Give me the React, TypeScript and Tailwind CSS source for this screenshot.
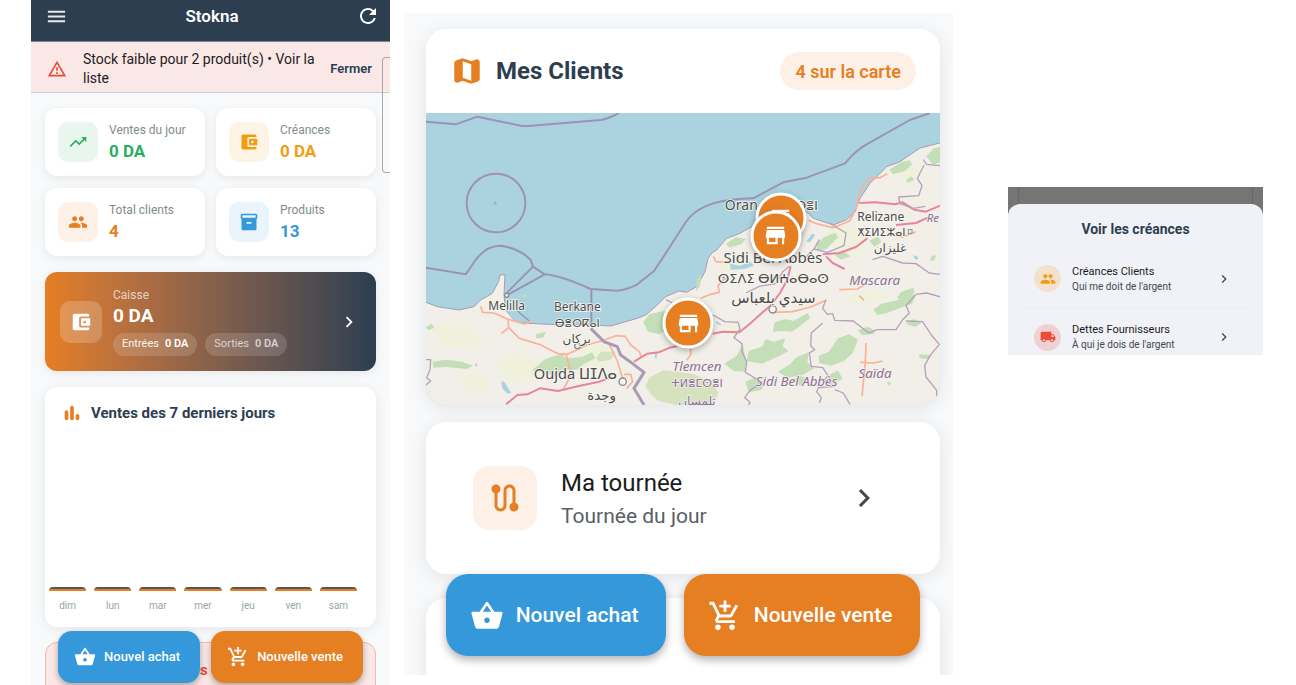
import React from 'react';
import {
    MdAddShoppingCart,
    MdChevronRight,
    MdInventory2,
    MdLocalShipping,
    MdMenu,
    MdOutlineWarningAmber,
    MdRefresh,
    MdRoute,
    MdTrendingUp
} from 'react-icons/md';

interface StatTileProps {
    label: string;
    value: string;
    icon: React.ReactNode;
    tileClass: string;
    valueClass: string;
}

interface IconProps {
    className?: string;
}

const days = ['dim', 'lun', 'mar', 'mer', 'jeu', 'ven', 'sam'];

// Rounded material glyphs that the icon package does not ship
const WalletIcon = ({ className }: IconProps) => (
    <svg viewBox="0 0 24 24" fill="currentColor" className={className} aria-hidden="true">
        <path d="M10 16V8c0-1.1.89-2 2-2h9V5c0-1.1-.9-2-2-2H5c-1.11 0-2 .9-2 2v14c0 1.1.89 2 2 2h14c1.1 0 2-.9 2-2v-1h-9c-1.11 0-2-.9-2-2zm3-8c-.55 0-1 .45-1 1v6c0 .55.45 1 1 1h9V8h-9zm3 5.5c-.83 0-1.5-.67-1.5-1.5s.67-1.5 1.5-1.5 1.5.67 1.5 1.5-.67 1.5-1.5 1.5z" />
    </svg>
);

const BarsIcon = ({ className }: IconProps) => (
    <svg viewBox="0 0 24 24" fill="currentColor" className={className} aria-hidden="true">
        <rect x="4" y="9" width="4" height="11" rx="2" />
        <rect x="10" y="4" width="4" height="16" rx="2" />
        <rect x="16" y="13" width="4" height="7" rx="2" />
    </svg>
);

const PeopleIcon = ({ className }: IconProps) => (
    <svg viewBox="0 0 24 24" fill="currentColor" className={className} aria-hidden="true">
        <path d="M16 11c1.66 0 2.99-1.34 2.99-3S17.66 5 16 5s-3 1.34-3 3 1.34 3 3 3zm-8 0c1.66 0 2.99-1.34 2.99-3S9.66 5 8 5 5 6.34 5 8s1.34 3 3 3zm0 2c-2.33 0-7 1.17-7 3.5V18c0 .55.45 1 1 1h12c.55 0 1-.45 1-1v-1.5c0-2.33-4.67-3.5-7-3.5zm8 0c-.29 0-.62.02-.97.05.02.01.03.03.04.04 1.14.83 1.93 1.94 1.93 3.41V18c0 .35-.07.69-.18 1H22c.55 0 1-.45 1-1v-1.5c0-2.33-4.67-3.5-7-3.5z" />
    </svg>
);

const BasketIcon = ({ className }: IconProps) => (
    <svg viewBox="0 0 24 24" fill="currentColor" className={className} aria-hidden="true">
        <path
            fillRule="evenodd"
            d="M17.21 9l-4.38-6.56c-.19-.28-.51-.42-.83-.42-.32 0-.64.14-.83.43L6.79 9H2c-.55 0-1 .45-1 1 0 .09.01.18.04.27l2.54 9.27c.23.84 1 1.46 1.92 1.46h13c.92 0 1.69-.62 1.93-1.46l2.54-9.27L23 10c0-.55-.45-1-1-1h-4.79zM9 9l3-4.4L15 9H9zm3 8c-1.1 0-2-.9-2-2s.9-2 2-2 2 .9 2 2-.9 2-2 2z"
        />
    </svg>
);

const StoreIcon = ({ className }: IconProps) => (
    <svg viewBox="0 0 24 24" fill="currentColor" className={className} aria-hidden="true">
        <path d="M20 4H4v2h16V4zm1 10v-2l-1-5H4l-1 5v2h1v6h10v-6h4v6h2v-6h1zm-9 4H6v-4h6v4z" />
    </svg>
);

const MapIcon = ({ className }: IconProps) => (
    <svg viewBox="0 0 24 24" fill="currentColor" className={className} aria-hidden="true">
        <path d="M14.65 4.98l-5-1.75c-.42-.15-.88-.15-1.3-.01L4.36 4.56C3.55 4.84 3 5.6 3 6.46v11.85c0 1.41 1.41 2.37 2.72 1.86l2.93-1.14c.22-.09.47-.09.69-.01l5 1.75c.42.15.88.15 1.3.01l3.99-1.34c.81-.27 1.36-1.04 1.36-1.9V5.69c0-1.41-1.41-2.37-2.72-1.86l-2.93 1.14c-.22.08-.46.09-.69.01zM15 18.89l-6-2.11V5.11l6 2.11v11.67z" />
    </svg>
);

const StatTile = ({ label, value, icon, tileClass, valueClass }: StatTileProps) => (
    <div className="flex h-[68px] items-center gap-[11px] rounded-xl bg-white px-[13px] shadow-[0_2px_8px_rgba(0,0,0,0.08)]">
        <div className={`flex size-10 shrink-0 items-center justify-center rounded-[10px] ${tileClass}`}>{icon}</div>
        <div className="pb-0.5">
            <p className="text-[12px] leading-5 whitespace-nowrap text-[#7f8c8d]">{label}</p>
            <p className={`text-[17px] leading-[22px] font-bold ${valueClass}`}>{value}</p>
        </div>
    </div>
);

const ClientMap = () => (
    <svg
        viewBox="0 0 1542 876"
        preserveAspectRatio="xMidYMid slice"
        className="block h-full w-full font-['Noto_Sans','DejaVu_Sans',sans-serif]"
        role="img"
        aria-label="Carte des clients"
    >
        <rect width="1542" height="876" fill="#aad3df" />
        {/* Land */}
        <path
            d="M-10 564L34 581 99 591 144 581 164 561 199 541 218 505 222 486 237 485 234 546 239 591 264 621 304 631 374 634 414 636 494 636 554 639 634 616 659 606 694 576 719 551 759 534 782 538 812 521 837 476 846 436 860 418 872 411 902 376 942 361 977 341 1012 301 1060 275 1110 275 1147 301 1162 316 1192 326 1222 336 1262 320 1287 296 1302 256 1332 211 1382 161 1422 146 1482 105 1560 85V890H-10Z"
            fill="#f2efe9"
            stroke="#a79cb3"
            strokeWidth="3"
        />
        {/* Farmland */}
        <g fill="#f0f1dc">
            <path d="M20 640l60-10 60 20 40 40-60 20-70-10z M210 740l70-20 60 30-20 50-80 10z M90 790l70-10 40 40-60 30z" />
            <path d="M1250 558l38-20 56-4 44 14-40 18-60 8z M450 690l60-10 50 40-10 40-80 10z M1190 350l60-20 60 20 10 60-70 30z" />
            <path d="M880 440l60-20 30 10-30 40-50 20z M1400 170l50-20 40 20-50 40z M900 640l30-10 20 30-30 10z" />
        </g>
        {/* Forests */}
        <g fill="#c4dfb8">
            <path d="M652 628l18-24 42-10 16 6-12 26 4 24-18 14-36-8z" />
            <path d="M318 772l40-34 50-16 12 14 48-4 30-14 10 18-36 18-20 16-44 2-22 16-30-8z" />
            <path d="M894 752l38-24 18-36 10 50-2 34-34-2z" />
            <path d="M962 744l6-30 42-14 8-22 26 8 34-10-8 24 18 14-30 16-50 22z" />
            <path d="M1040 656l6-28 34-10 22 6 44-24 6 16-34 26-20 14-30-2z" />
            <path d="M1056 776l36-22 20-22 36-14-4 28 20 20-34 20-46 8z" />
            <path d="M1178 728l30-12 28-40 34-12 26 16-16 40-26 24-40 14-34-8z" />
            <path d="M958 806l30-14 28 16-8 22-40 8z M1096 800l30-10 26 12-30 16z M1210 786l26-14 14 26-30 16z" />
            <path d="M1342 590l24-18 48-10 34-20 22 4-12 26-34 12-40 16-30 6z M1412 556l14-20 36-12 4 14-24 20z" />
            <path d="M900 392l30-20 30 6-14 16-36 10z M1170 395l24-22 34-14 8 14-34 34-26 8z" />
            <path d="M1330 384l26-14 10 16-20 16z M1224 424l30-8 20 14-30 10z" />
            <path d="M1390 170l35-22 26-6 8 12-22 20-36 10z M1500 130l24-24 18-4v46l-20 8z M1440 200l18-10 6 12-20 8z" />
            <path d="M1295 652l30-11 24 12-6 10-34 4z M1438 632l24-14 25 12-20 12z M1478 724l40 2-10 12-26-2z" />
            <path d="M20 746l40-6 48 6 34 12-20 10-60-6-40 2z M0 642l16-10 10 12-20 8z" />
            <path d="M290 548l10-4 2 12z M330 664l30-8-8 18-22 2z M1516 430l14-4-4 16-14 2z M812 500l14-16-4 36-12 14z M1382 806l14 2-6 12z" />
        </g>
        <path
            d="M680 850l-22-30 12-26 40-22 44 4 50 8 50 22 24 34-20 36h-110l-50-12z M510 736l14-20 46 0-16 24-36 6z"
            fill="#d6e2bd"
        />
        <g fill="#aad3df">
            <path d="M226 804l10 4 12 20 8 12-12 2-16-18z" />
            <path d="M912 452l30 6 30-12 12 12-30 10-40 2z M1140 386l18-24 10 4-16 22z" />
            <path d="M148 750l4 0 2 10-6 0z M688 716l6 4-2 14-6 0z M870 624l12 6 4 8-14-6z M1462 426l14 6 0 8-10-2z" />
            <path d="M246 594l14 8 22 22 20 4-30-2-18-14z" />
        </g>
        {/* Secondary roads */}
        <g fill="none" stroke="#fbb197" strokeWidth="5" strokeLinejoin="round">
            <path d="M164 580l6 18 34 2 40 18 50 15 26-8" />
            <path d="M246 618l2 26-22 18M248 644l32 32 60 18 56 28 28 2 30-14 28-14 44-12 44-16 28 2 16 26 26 20 6 16" />
            <path d="M420 724l10 38 8 18-26 50M550 694l24 50 16 52M594 784l20 0 6 22-18 20" />
            <path d="M862 430l8 16 32 2M824 556l30-12 26-6-4-20 16-18 16-4M1040 598l60-2 54-14 46-20" />
            <path d="M1147 322l24 10 50 12 50-20 16-30M1290 290l12-60 30-34 30-2 22-12" />
            <path d="M1240 530l54-2 22-12M1320 690l-2 58-14 0 40 2 26-6M1318 746l-10 104" />
            <path d="M1300 548l14 14M782 742l12-16 0-18M1400 366l30 6 40-16" />
        </g>
        {/* Main roads */}
        <g fill="none" stroke="#e8859e" strokeWidth="6" strokeLinejoin="round">
            <path d="M240 874l34-28 30-2 38-18 54 8 66-16 58-12 34-12M624 746l40-24 34-4 34-14 42-10M860 662l30-6 50 2 30-24 40-36 22-18 30-40 22-40 10-40" />
            <path d="M1300 270l48-2 60 6 22-6 34 22 36 6 42-18M1410 336l60-6 36-16" />
            <path d="M1190 424l50-4 50-18 34-26M1200 430l20 20 36 18" />
        </g>
        {/* Province limits */}
        <g fill="none" stroke="#b6a1bd" strokeWidth="4" strokeLinejoin="round">
            <path d="M862 606l34 20 40 2 6 20-18 26 24 18 0 24 14 30-4 32 34 20 10 14-30 20-16 22 16 14-6 12" />
            <path d="M1200 560l-10 26 14 18 16-2 6 20 56 2 46 36 26-10 56 0 20-30 20-20-10-22 30-34 32-4 42 12" />
            <path d="M1190 630l-34 30-2 38 12 12-16 10 6 40 34 4 16 24-12 14 34 18-50 4-6 12 14 18-6 16M1226 830l26 10 20 34" />
            <path d="M1440 624l50 2 26 40 24 28-28 34-16 30 4 34 32 40 0 20" />
            <path d="M1542 158l-40-4-10-14M1494 156l-20 40 14 22-10 30-60 4 4 20 40 14 36-6" />
            <path d="M1180 380l-16 28-30 30M1164 408l40 10 50-20 6-38-50-30M960 540l40-20 50-8 20-36 20-16" />
            <path d="M1340 440l30-10 60 20 40 2 40 28 32 4" />
            <path d="M0 740l14 0-2 30-10 24 12 10-14 12M720 560l20 10 10 18" />
        </g>
        {/* Maritime and national borders */}
        <g fill="none" stroke="#9c93b4" strokeWidth="6" strokeLinejoin="round">
            <path d="M0 26L89 34 154 11 284 38Q310 40 334 37L524 21Q545 18 579 0" />
            <circle cx="210" cy="270" r="88" />
            <path d="M0 464L119 484 149 441Q180 398 224 398 280 406 314 441L321 461 356 484Q400 486 494 528L574 533Q610 528 634 514L684 474 706 441 774 336Q800 290 862 271 910 258 982 256L1072 208 1142 194 1257 151Q1290 110 1332 88L1452 21 1512 0" />
            <path d="M321 461L241 541M356 484L244 546M496 528V640" />
            <path d="M270 590l40 34" strokeWidth="4" />
        </g>
        <path d="M494 646l40 40 40 15 10 25 35 25 35 27-30 48 30 50" fill="none" stroke="#a99bb6" strokeWidth="9" />
        <circle cx="208" cy="271" r="4" fill="#8fb2c4" />
        <g fill="#f7f5f1" stroke="#8b8b8b" strokeWidth="4">
            <circle cx="242" cy="547" r="6" />
            <circle cx="454" cy="699" r="8" />
            <circle cx="590" cy="806" r="11" />
            <circle cx="1040" cy="589" r="11" />
            <rect x="1447" y="350" width="11" height="11" strokeWidth="3" />
        </g>
        {/* City names */}
        <g fill="#4b4b4b" stroke="#f7f5f1" strokeWidth="5" paintOrder="stroke" textAnchor="middle" fontSize="36">
            <text x="242" y="590">Melilla</text>
            <text x="454" y="594">Berkane</text>
            <text x="454" y="641" fontSize="33">ⴱⴻⵔⴽⴰⵏ</text>
            <text x="452" y="690">بركان</text>
            <text x="448" y="798" fontSize="44">Oujda ⵡⵊⴷⴰ</text>
            <text x="527" y="861" fontSize="40">وجدة</text>
            <text x="946" y="292" fontSize="42">Oran</text>
            <text x="1142" y="290" fontSize="36">ⵔⴻⵏ</text>
            <text x="1041" y="450" fontSize="45">Sidi Bel Abbès</text>
            <text x="1042" y="509" fontSize="39">ⵙⵉⴷⵉ ⴱⵍⵄⴰⴱⴰⵙ</text>
            <text x="1042" y="571" fontSize="45">سيدي بلعباس</text>
            <text x="1364" y="324">Relizane</text>
            <text x="1366" y="370" fontSize="33">ⵅⵉⵍⵉⵣⴰⵏ</text>
            <text x="1392" y="418">غليزان</text>
        </g>
        {/* Province names */}
        <g fill="#8d6f94" stroke="#f5f2ee" strokeWidth="4" paintOrder="stroke" textAnchor="middle" fontSize="40">
            <text x="813" y="773" fontStyle="italic">Tlemcen</text>
            <text x="813" y="822" fontSize="33">ⵜⵍⴻⵎⵙⴻⵏ</text>
            <text x="813" y="876" fontSize="36">تلمسان</text>
            <text x="1112" y="820" fontStyle="italic">Sidi Bel Abbès</text>
            <text x="1346" y="516" fontStyle="italic">Mascara</text>
            <text x="1347" y="796" fontStyle="italic">Saïda</text>
            <text x="1502" y="328" fontStyle="italic" fontSize="34" textAnchor="start">Re</text>
        </g>
    </svg>
);

const pins = [
    { name: 'Client Oran', place: 'left-[69%] top-[36%]' },
    { name: 'Client Sidi Bel Abbès', place: 'left-[68%] top-[42%]' },
    { name: 'Client Tlemcen', place: 'left-[51%] top-[72%]' }
];

const HomeScreen = () => (
    <section className="relative h-full min-w-0 flex-[359_1_0%] overflow-hidden bg-[#f8f9fb]">
        <header className="flex h-[42px] items-start justify-between border-b border-[#7d8792] bg-[#2c3e50] pt-1 pr-[10px] pl-[13px] text-white">
            <button type="button" aria-label="Menu" className="flex size-6 items-center justify-center text-[#e8eaee]">
                <MdMenu className="size-[23px] shrink-0" />
            </button>
            <h1 className="text-[17px] leading-6 font-semibold">Stokna</h1>
            <button type="button" aria-label="Actualiser" className="flex size-6 items-center justify-center">
                <MdRefresh className="size-6 shrink-0" />
            </button>
        </header>

        <div className="flex h-[51px] items-center border-b border-[#c5cbd7] bg-[#f9e8e6] pt-[3px] pr-[18px] pl-4">
            <MdOutlineWarningAmber className="size-5 shrink-0 text-[#e74c3c]" />
            <p className="ml-4 min-w-0 flex-1 text-[14px] leading-[19px] text-[#1f2024]">
                Stock faible pour 2 produit(s) • Voir la liste
            </p>
            <button type="button" className="shrink-0 text-[13px] font-semibold text-[#2c3e50]">Fermer</button>
        </div>
        <div className="absolute top-[57px] right-0 h-[116px] w-2 rounded-l border border-r-0 border-[#a9a9ad]" />

        <main className="px-[14px] pt-[15px]">
            <div className="grid grid-cols-2 gap-x-[11px] gap-y-3">
                <StatTile
                    label="Ventes du jour"
                    value="0 DA"
                    icon={<MdTrendingUp className="size-5" />}
                    tileClass="bg-[#e8f6ee] text-[#27ae60]"
                    valueClass="text-[#27ae60]"
                />
                <StatTile
                    label="Créances"
                    value="0 DA"
                    icon={<WalletIcon className="size-5" />}
                    tileClass="bg-[#fef4e6] text-[#f39c12]"
                    valueClass="text-[#f39c12]"
                />
                <StatTile
                    label="Total clients"
                    value="4"
                    icon={<PeopleIcon className="size-5" />}
                    tileClass="bg-[#fdf1e7] text-[#e67e22]"
                    valueClass="text-[#e67e22]"
                />
                <StatTile
                    label="Produits"
                    value="13"
                    icon={<MdInventory2 className="size-5" />}
                    tileClass="bg-[#e9f4fd] text-[#3498db]"
                    valueClass="text-[#3498db]"
                />
            </div>

            <button
                type="button"
                className="mt-4 flex h-[99px] w-full items-center rounded-xl bg-linear-to-r from-[#e67e22] to-[#2c3e50] pr-4 pl-[15px] text-left text-white shadow-[0_2px_8px_rgba(0,0,0,0.08)]"
            >
                <span className="flex size-[42px] shrink-0 items-center justify-center rounded-[10px] bg-white/20">
                    <WalletIcon className="size-[22px]" />
                </span>
                <span className="ml-[11px] flex flex-1 flex-col">
                    <span className="text-[12px] leading-4 text-white/70">Caisse</span>
                    <span className="text-[19px] leading-[26px] font-bold">0 DA</span>
                    <span className="mt-1 flex gap-2">
                        <span className="flex h-[23px] items-center gap-1.5 rounded-full bg-white/15 px-[9px] text-[11px] text-white/90">
                            Entrées <b className="font-semibold text-white">0 DA</b>
                        </span>
                        <span className="flex h-[23px] items-center gap-1.5 rounded-full bg-white/15 px-[9px] text-[11px] text-white/70">
                            Sorties <b className="font-semibold">0 DA</b>
                        </span>
                    </span>
                </span>
                <MdChevronRight className="size-[22px]" />
            </button>

            <div className="mt-4 flex h-60 flex-col rounded-xl bg-white shadow-[0_2px_12px_rgba(0,0,0,0.08)]">
                <h2 className="flex items-center gap-2 px-4 pt-[15px] text-[15px] leading-[22px] font-bold text-[#2c3e50]">
                    <BarsIcon className="size-[22px] text-[#e67e22]" />
                    Ventes des 7 derniers jours
                </h2>
                <div className="mt-auto grid grid-cols-7 gap-2 pr-[19px] pb-[14px] pl-1">
                    {days.map((day) => (
                        <div key={day} className="flex flex-col items-center">
                            <div className="h-1 w-full rounded-t border-b-2 border-[#e67e22] bg-[#5b5450]" />
                            <span className="mt-2 text-[10px] leading-[14px] text-[#95a5a6]">{day}</span>
                        </div>
                    ))}
                </div>
            </div>

            <div className="mt-[15px] h-20 rounded-xl border border-[#f5b7b1] bg-[#f9e8e6] pt-4">
                <p className="pl-[154px] text-[15px] leading-[22px] font-bold text-[#e74c3c]">s</p>
            </div>
        </main>

        <div className="absolute inset-x-0 bottom-[2px] flex gap-[11px] px-[27px]">
            <button
                type="button"
                className="flex h-[52px] flex-[142_1_0%] items-center justify-center gap-2 rounded-[14px] bg-[#3498db] pr-1 text-[13px] font-medium whitespace-nowrap text-white shadow-[0_3px_6px_rgba(0,0,0,0.3)]"
            >
                <BasketIcon className="size-[22px]" />
                Nouvel achat
            </button>
            <button
                type="button"
                className="flex h-[52px] flex-[152_1_0%] items-center justify-center gap-2 rounded-[14px] bg-[#e67e22] pr-1 text-[13px] font-medium whitespace-nowrap text-white shadow-[0_3px_6px_rgba(0,0,0,0.3)]"
            >
                <MdAddShoppingCart className="size-[22px]" />
                Nouvelle vente
            </button>
        </div>
    </section>
);

const ClientsScreen = () => (
    <div className="ml-[14px] h-full min-w-0 flex-[549_1_0%] pt-[13px] pb-[10px]">
        <section className="relative h-full overflow-hidden bg-[#f8f9fb] pt-4 pr-[13px] pl-[22px]">
            <div className="overflow-hidden rounded-[20px] bg-white shadow-[0_3px_18px_rgba(0,0,0,0.09)]">
                <div className="flex h-[84px] items-center px-6">
                    <MapIcon className="size-[34px] text-[#e67e22]" />
                    <h2 className="ml-3 flex-1 text-[24px] leading-8 font-bold text-[#2c3e50]">Mes Clients</h2>
                    <span className="flex h-[38px] items-center rounded-full bg-[#fdf1e7] px-[15px] text-[18px] font-semibold text-[#e67e22]">
                        4 sur la carte
                    </span>
                </div>
                <div className="relative h-[292px]">
                    <ClientMap />
                    {pins.map((pin) => (
                        <button
                            key={pin.name}
                            type="button"
                            aria-label={pin.name}
                            className={`absolute flex size-[51px] -translate-x-1/2 -translate-y-1/2 items-center justify-center rounded-full border-[3px] border-white bg-[#e67e22] text-white shadow-[0_2px_6px_rgba(0,0,0,0.3)] ${pin.place}`}
                        >
                            <StoreIcon className="size-[26px]" />
                        </button>
                    ))}
                </div>
            </div>

            <button
                type="button"
                className="mt-[17px] flex h-[152px] w-full items-center rounded-[20px] bg-white pr-[58px] pl-[47px] text-left shadow-[0_3px_18px_rgba(0,0,0,0.09)]"
            >
                <span className="flex size-16 shrink-0 items-center justify-center rounded-[16px] bg-[#fdf1e7]">
                    <MdRoute className="size-9 text-[#e67e22]" />
                </span>
                <span className="ml-6 flex flex-1 flex-col pt-0.5">
                    <span className="text-[24px] leading-[34px] text-[#1b1c20]">Ma tournée</span>
                    <span className="text-[21px] leading-8 text-[#5b5e66]">Tournée du jour</span>
                </span>
                <MdChevronRight className="size-9 text-[#44474e]" />
            </button>

            <div className="mt-6 h-[152px] rounded-[20px] bg-white shadow-[0_3px_18px_rgba(0,0,0,0.09)]" />

            <div className="absolute inset-x-0 bottom-[19px] flex gap-[18px] pr-[33px] pl-[42px]">
                <button
                    type="button"
                    className="flex h-[82px] flex-[220_1_0%] items-center justify-center gap-3 rounded-[22px] bg-[#3498db] pt-0.5 pr-1 text-[21px] font-medium whitespace-nowrap text-white shadow-[0_4px_9px_rgba(0,0,0,0.3)]"
                >
                    <BasketIcon className="size-[34px]" />
                    Nouvel achat
                </button>
                <button
                    type="button"
                    className="flex h-[82px] flex-[236_1_0%] items-center justify-center gap-3 rounded-[22px] bg-[#e67e22] pt-0.5 pr-1 text-[21px] font-medium whitespace-nowrap text-white shadow-[0_4px_9px_rgba(0,0,0,0.3)]"
                >
                    <MdAddShoppingCart className="size-[34px]" />
                    Nouvelle vente
                </button>
            </div>
        </section>
    </div>
);

interface DebtRowProps {
    title: string;
    subtitle: string;
    icon: React.ReactNode;
    badgeClass: string;
}

const DebtRow = ({ title, subtitle, icon, badgeClass }: DebtRowProps) => (
    <button type="button" className="flex h-[58px] w-full items-center pr-4 pl-[11px] text-left">
        <span className={`flex size-[27px] shrink-0 items-center justify-center rounded-full ${badgeClass}`}>{icon}</span>
        <span className="ml-[11px] flex flex-1 flex-col whitespace-nowrap">
            <span className="text-[11px] leading-4 text-[#1b1c20]">{title}</span>
            <span className="text-[10px] leading-[14px] text-[#44474e]">{subtitle}</span>
        </span>
        <MdChevronRight className="size-4 text-[#44474e]" />
    </button>
);

const DebtSheet = () => (
    <div className="mr-[33px] ml-[55px] min-w-0 flex-[255_1_0%] pt-[187px]">
        <aside className="h-[168px] overflow-hidden bg-[#757575]">
            <div className="mx-[10px] h-[17px] border-x border-[#666666]" />
            <div className="rounded-t-xl bg-[#f1f2f8] px-[15px] pt-4">
                <h2 className="pb-3 text-center text-[14px] leading-[18px] font-bold text-[#2c3e50]">Voir les créances</h2>
                <div className="divide-y divide-[#ecedf3]">
                    <DebtRow
                        title="Créances Clients"
                        subtitle="Qui me doit de l'argent"
                        icon={<PeopleIcon className="size-4" />}
                        badgeClass="bg-[#f2e1cb] text-[#f39c12]"
                    />
                    <DebtRow
                        title="Dettes Fournisseurs"
                        subtitle="À qui je dois de l'argent"
                        icon={<MdLocalShipping className="size-4" />}
                        badgeClass="bg-[#efd1d3] text-[#e74c3c]"
                    />
                </div>
            </div>
        </aside>
    </div>
);

export default function App() {
    return (
        <div className="flex h-screen overflow-hidden bg-white pl-[31px] font-['Roboto',sans-serif]">
            <HomeScreen />
            <ClientsScreen />
            <DebtSheet />
        </div>
    );
}
